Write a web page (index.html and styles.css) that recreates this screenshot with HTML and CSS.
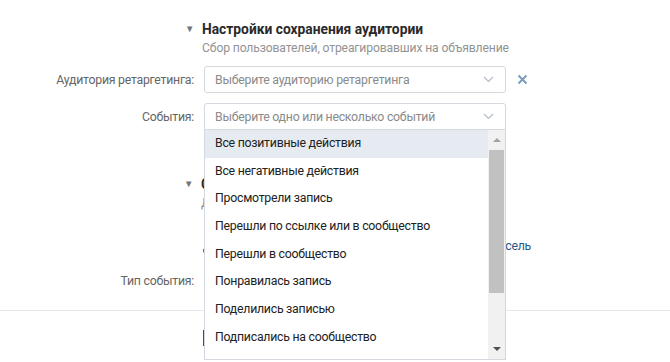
FILE: index.html
```html
<!DOCTYPE html>
<html lang="ru">
<head>
  <meta charset="UTF-8">
  <title>Настройки сохранения аудитории</title>
  <link rel="stylesheet" href="styles.css">
</head>
<body>
  <div class="page">
    <div class="section-head">
      <span class="tri">&#9660;</span>
      <div>
        <div class="title">Настройки сохранения аудитории</div>
        <div class="subtitle">Сбор пользователей, отреагировавших на объявление</div>
      </div>
    </div>

    <div class="row row-first">
      <div class="label">Аудитория ретаргетинга:</div>
      <div class="select">
        <span class="placeholder">Выберите аудиторию ретаргетинга</span>
        <svg class="chev" width="11" height="7" viewBox="0 0 11 7"><path d="M1 1l4.5 4.5L10 1" fill="none" stroke="#b4bcc5" stroke-width="1.2"/></svg>
      </div>
      <svg class="remove" width="11" height="11" viewBox="0 0 11 11"><path d="M1.5 1.5l8 8M9.5 1.5l-8 8" stroke="#7a9bbd" stroke-width="2"/></svg>
    </div>

    <div class="row">
      <div class="label">События:</div>
      <div class="select open">
        <span class="placeholder">Выберите одно или несколько событий</span>
        <svg class="chev" width="11" height="7" viewBox="0 0 11 7"><path d="M1 1l4.5 4.5L10 1" fill="none" stroke="#b4bcc5" stroke-width="1.2"/></svg>
        <div class="dropdown">
          <ul class="options">
            <li class="active">Все позитивные действия</li>
            <li>Все негативные действия</li>
            <li>Просмотрели запись</li>
            <li>Перешли по ссылке или в сообщество</li>
            <li>Перешли в сообщество</li>
            <li>Понравилась запись</li>
            <li>Поделились записью</li>
            <li>Подписались на сообщество</li>
          </ul>
          <div class="scrollbar">
            <span class="arrow up"></span>
            <span class="thumb"></span>
            <span class="arrow down"></span>
          </div>
        </div>
      </div>
    </div>

    <div class="section-head second">
      <span class="tri">&#9660;</span>
      <div>
        <div class="title">С</div>
        <div class="subtitle">Д</div>
      </div>
    </div>

    <div class="line-row">
      <span>Д</span>
      <a href="#">Карусель</a>
    </div>

    <div class="row row-type">
      <div class="label">Тип события:</div>
      <div class="select"></div>
    </div>

    <div class="footer">
      <span class="btn"></span>
    </div>
  </div>
</body>
</html>
```

FILE: styles.css
```css
body { margin: 0; background: #fff; font-family: Roboto, "Open Sans", Arial, sans-serif; font-size: 12.3px; letter-spacing: -0.25px; color: #000; }
.page { padding-top: 21px; min-height: 362px; box-sizing: border-box; }

.section-head { display: flex; padding-left: 185px; }
.tri { width: 17px; font-size: 9.5px; color: #6f7680; line-height: 16px; letter-spacing: 0; }
.title { font-weight: bold; font-size: 13.8px; letter-spacing: 0; color: #2a2a2a; line-height: 16px; }
.subtitle { color: #939393; font-size: 12.2px; letter-spacing: -0.15px; line-height: 18px; margin-top: 2px; }

.row { display: grid; grid-template-columns: 194px 302px auto; column-gap: 10px; align-items: center; margin-top: 10px; }
.row-first { margin-top: 9px; }
.label { text-align: right; color: #656565; }
.select { position: relative; height: 27px; border: 1px solid #d3d9de; border-radius: 3px; box-sizing: border-box; display: flex; align-items: center; padding: 0 10px; background: #fff; }
.placeholder { color: #8a8a8a; flex: 1; }
.chev { margin-right: 1px; }
.remove { margin-left: 1px; }
.select.open { border-radius: 3px 3px 0 0; }

.dropdown { position: absolute; top: 26px; left: -1px; right: -1px; height: 230px; background: #fff; border: 1px solid #d3d9de; border-top: none; box-sizing: border-box; display: flex; z-index: 2; overflow: hidden; }
.options { list-style: none; margin: 0; padding: 0; flex: 1; }
.options li { height: 27.7px; line-height: 27px; padding-left: 10px; color: #222; white-space: nowrap; }
.options li.active { background: #e5ebf1; }

.scrollbar { width: 17px; background: #f1f1f1; position: relative; }
.thumb { position: absolute; left: 1px; right: 1px; top: 20px; height: 143px; background: #c1c1c1; }
.arrow { position: absolute; left: 5px; width: 0; height: 0; border-left: 4px solid transparent; border-right: 4px solid transparent; }
.arrow.up { top: 8px; border-bottom: 4px solid #a3a3a3; }
.arrow.down { bottom: 8px; border-top: 4px solid #505050; }

.second { margin-top: 46px; padding-left: 184px; }
.line-row { display: flex; justify-content: space-between; width: 328px; margin: 26px 0 0 203px; line-height: 16px; color: #222; }
.line-row a { color: #2a5885; text-decoration: none; }

.row-type { margin-top: 13px; }

.footer { margin-top: 16px; border-top: 1px solid #e7e8ec; padding: 19px 0 0 203px; }
.btn { display: inline-block; width: 20px; height: 16px; background: #4a4a4a; vertical-align: top; }
```
